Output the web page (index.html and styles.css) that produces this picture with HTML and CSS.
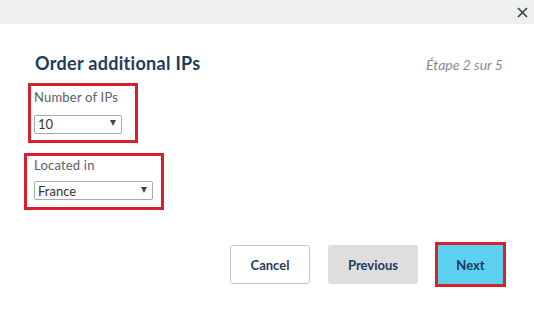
FILE: index.html
```html
<!DOCTYPE html>
<html lang="en">

<head>
    <meta charset="UTF-8">
    <meta name="viewport" content="width=device-width, initial-scale=1.0">
    <title>Order additional IPs</title>
    <link rel="stylesheet" href="styles.css">
</head>

<body>

    <div class="modal">
        <div class="modal-top">
            <button class="close" aria-label="Close">
                <svg width="11" height="11" viewBox="0 0 11 11">
                    <path d="M1 1 L10 10 M10 1 L1 10" stroke="#3a3f44" stroke-width="1.6" fill="none"/>
                </svg>
            </button>
        </div>

        <div class="modal-body">
            <div class="title-row">
                <h2>Order additional IPs</h2>
                <span class="step">Étape 2 sur 5</span>
            </div>

            <div class="field field-count">
                <label for="ipCount">Number of IPs</label>
                <div class="select-wrap select-count">
                    <select id="ipCount">
                        <option>10</option>
                    </select>
                </div>
            </div>

            <div class="field field-location">
                <label for="ipLocation">Located in</label>
                <div class="select-wrap select-location">
                    <select id="ipLocation">
                        <option>France</option>
                    </select>
                </div>
            </div>

            <div class="actions">
                <button class="btn btn-cancel">Cancel</button>
                <button class="btn btn-previous">Previous</button>
                <button class="btn btn-next">Next</button>
            </div>
        </div>
    </div>

</body>

</html>
```

FILE: styles.css
```css
* {
    margin: 0;
    padding: 0;
    box-sizing: border-box;
    font-family: Lato, "Open Sans", sans-serif;
}

body {
    background: #fff;
}

.modal {
    width: 534px;
    height: 309px;
}

.modal-top {
    height: 24px;
    background: #eef0ee;
    display: flex;
    justify-content: flex-end;
    align-items: center;
    padding-right: 6px;
}

.close {
    border: none;
    background: none;
    width: 11px;
    height: 11px;
    display: flex;
}

.modal-body {
    padding: 28px 31px 0 35px;
}

.title-row {
    display: flex;
    justify-content: space-between;
    align-items: baseline;
    margin-bottom: 9px;
}

.title-row h2 {
    font-size: 18px;
    line-height: 22px;
    font-weight: 700;
    letter-spacing: 0.3px;
    color: #1d3c5b;
}

.step {
    font-size: 14px;
    font-style: italic;
    color: #8a8a8a;
}

.field {
    display: inline-flex;
    flex-direction: column;
    align-items: flex-start;
    border: 3px solid #d91f2b;
}

.field label {
    display: block;
    font-size: 13px;
    line-height: 18px;
    letter-spacing: 0.2px;
    color: #56616b;
}

.field-count {
    margin-left: -7px;
    padding: 2px 13px 6px 3px;
}

.field-count label {
    margin-bottom: 7px;
}

.field-location {
    display: flex;
    width: 140px;
    margin: 10px 0 0 -11px;
    padding: 0 8px 7px 7px;
}

.field-location label {
    margin-bottom: 6px;
}

.select-wrap {
    position: relative;
}

.select-wrap::after {
    content: "";
    position: absolute;
    right: 6px;
    top: 7px;
    border-left: 3px solid transparent;
    border-right: 3px solid transparent;
    border-top: 6px solid #444;
    pointer-events: none;
}

.select-wrap select {
    appearance: none;
    -webkit-appearance: none;
    height: 19px;
    border: 1px solid #a9a9a9;
    border-radius: 2px;
    background: #fff;
    font-size: 13px;
    color: #333;
    padding: 0 3px;
}

.select-count select {
    width: 88px;
}

.select-location select {
    width: 119px;
}

.actions {
    display: flex;
    justify-content: flex-end;
    align-items: center;
    margin-top: 35px;
}

.btn {
    height: 39px;
    font-size: 13px;
    font-weight: 700;
    color: #1d3c5b;
    border-radius: 3px;
    cursor: pointer;
}

.btn-cancel {
    width: 80px;
    background: #fff;
    border: 1px solid #c8c8c8;
    margin-right: 18px;
}

.btn-previous {
    width: 90px;
    background: #dedede;
    border: none;
    margin-right: 20px;
}

.btn-next {
    width: 65px;
    background: #5bd0ef;
    border: none;
    border-radius: 0;
    outline: 3px solid #d91f2b;
    outline-offset: 0;
}
```
